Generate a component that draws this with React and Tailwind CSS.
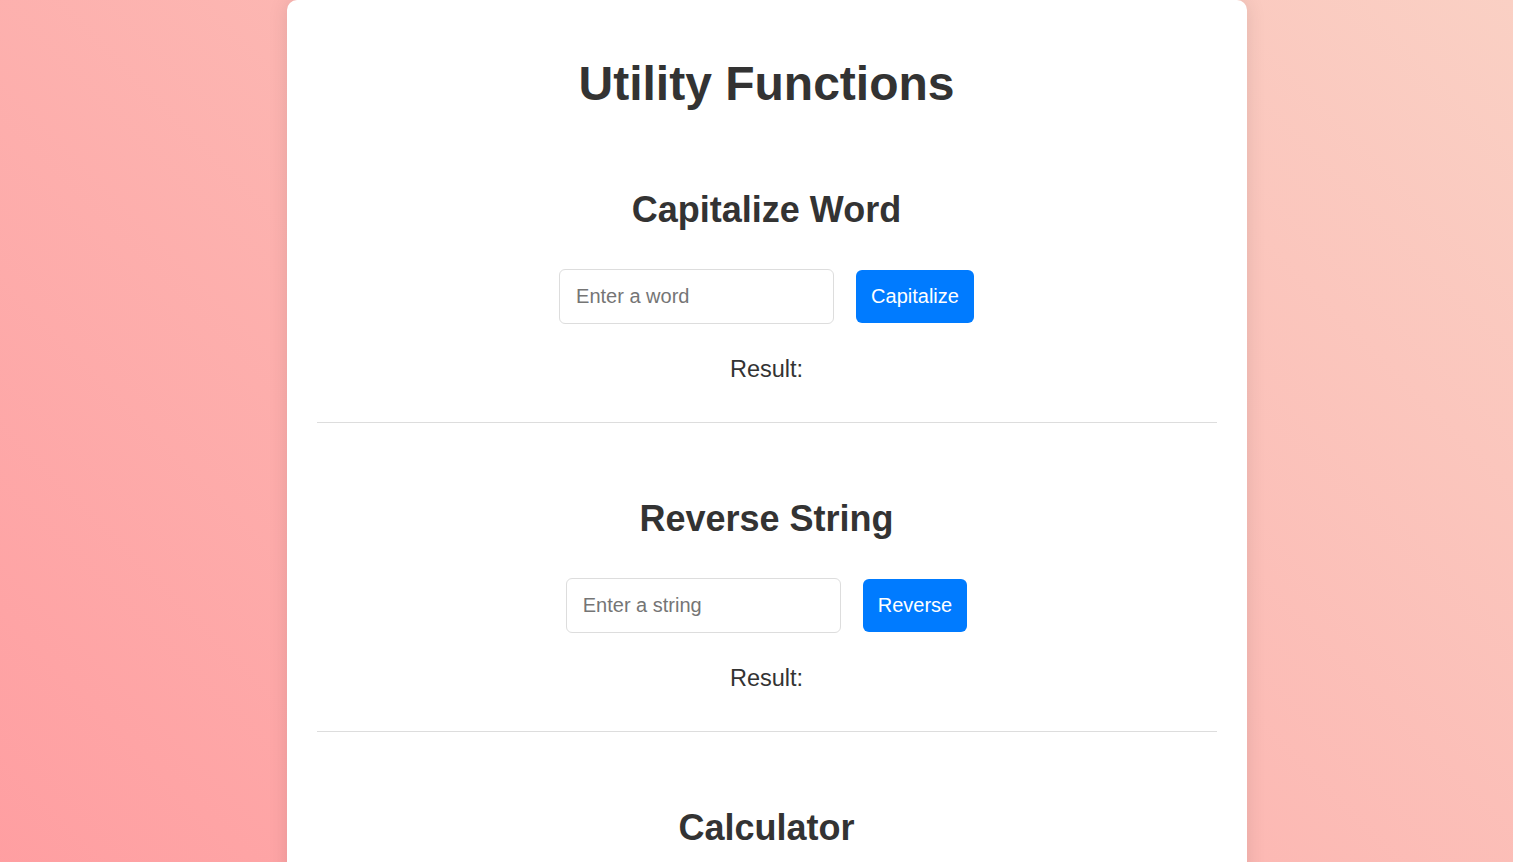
import { useState } from 'react';

const Section = ({ title, placeholder, buttonLabel, onRun }) => {
  const [value, setValue] = useState('');
  const [result, setResult] = useState('');

  return (
    <div className="pt-[75px] pb-[41px] border-b border-[#dddddd] flex flex-col items-center">
      <h2 className="text-[36px] leading-[41px] font-bold text-[#333333]">{title}</h2>
      <div className="mt-[38.5px] flex items-center gap-[22px]">
        <input
          type="text"
          value={value}
          onChange={(e) => setValue(e.target.value)}
          placeholder={placeholder}
          className="w-[275px] h-[55px] px-[16px] text-[20px] text-[#333333] placeholder:text-[#757575] border border-[#dddddd] rounded-[6px] bg-white outline-none"
        />
        <button
          onClick={() => setResult(onRun(value))}
          className="h-[53px] px-[15px] text-[20px] leading-[23px] text-white bg-[#007bff] rounded-[6px]"
        >
          {buttonLabel}
        </button>
      </div>
      <p className="mt-[34.5px] text-[23.5px] leading-[23px] text-[#333333]">Result: {result}</p>
    </div>
  );
};

export default function App() {
  return (
    <div
      className="min-h-screen pl-[20px] bg-[linear-gradient(45deg,#ff9a9e_0%,#fad0c4_100%)]"
      style={{ fontFamily: '"Liberation Sans", Arial, sans-serif' }}
    >
      <div className="w-[960px] mx-auto bg-white rounded-[10px] shadow-[0_0_20px_rgba(0,0,0,0.1)] px-[30px] pt-[56px] pb-[40px]">
        <h1 className="text-center text-[48px] leading-[55px] font-bold text-[#333333] mb-[3px]">
          Utility Functions
        </h1>
        <Section
          title="Capitalize Word"
          placeholder="Enter a word"
          buttonLabel="Capitalize"
          onRun={(v) => v.charAt(0).toUpperCase() + v.slice(1)}
        />
        <Section
          title="Reverse String"
          placeholder="Enter a string"
          buttonLabel="Reverse"
          onRun={(v) => v.split('').reverse().join('')}
        />
        <div className="pt-[75px] flex flex-col items-center">
          <h2 className="text-[36px] leading-[41px] font-bold text-[#333333]">Calculator</h2>
          <div className="h-[200px]" />
        </div>
      </div>
    </div>
  );
}
